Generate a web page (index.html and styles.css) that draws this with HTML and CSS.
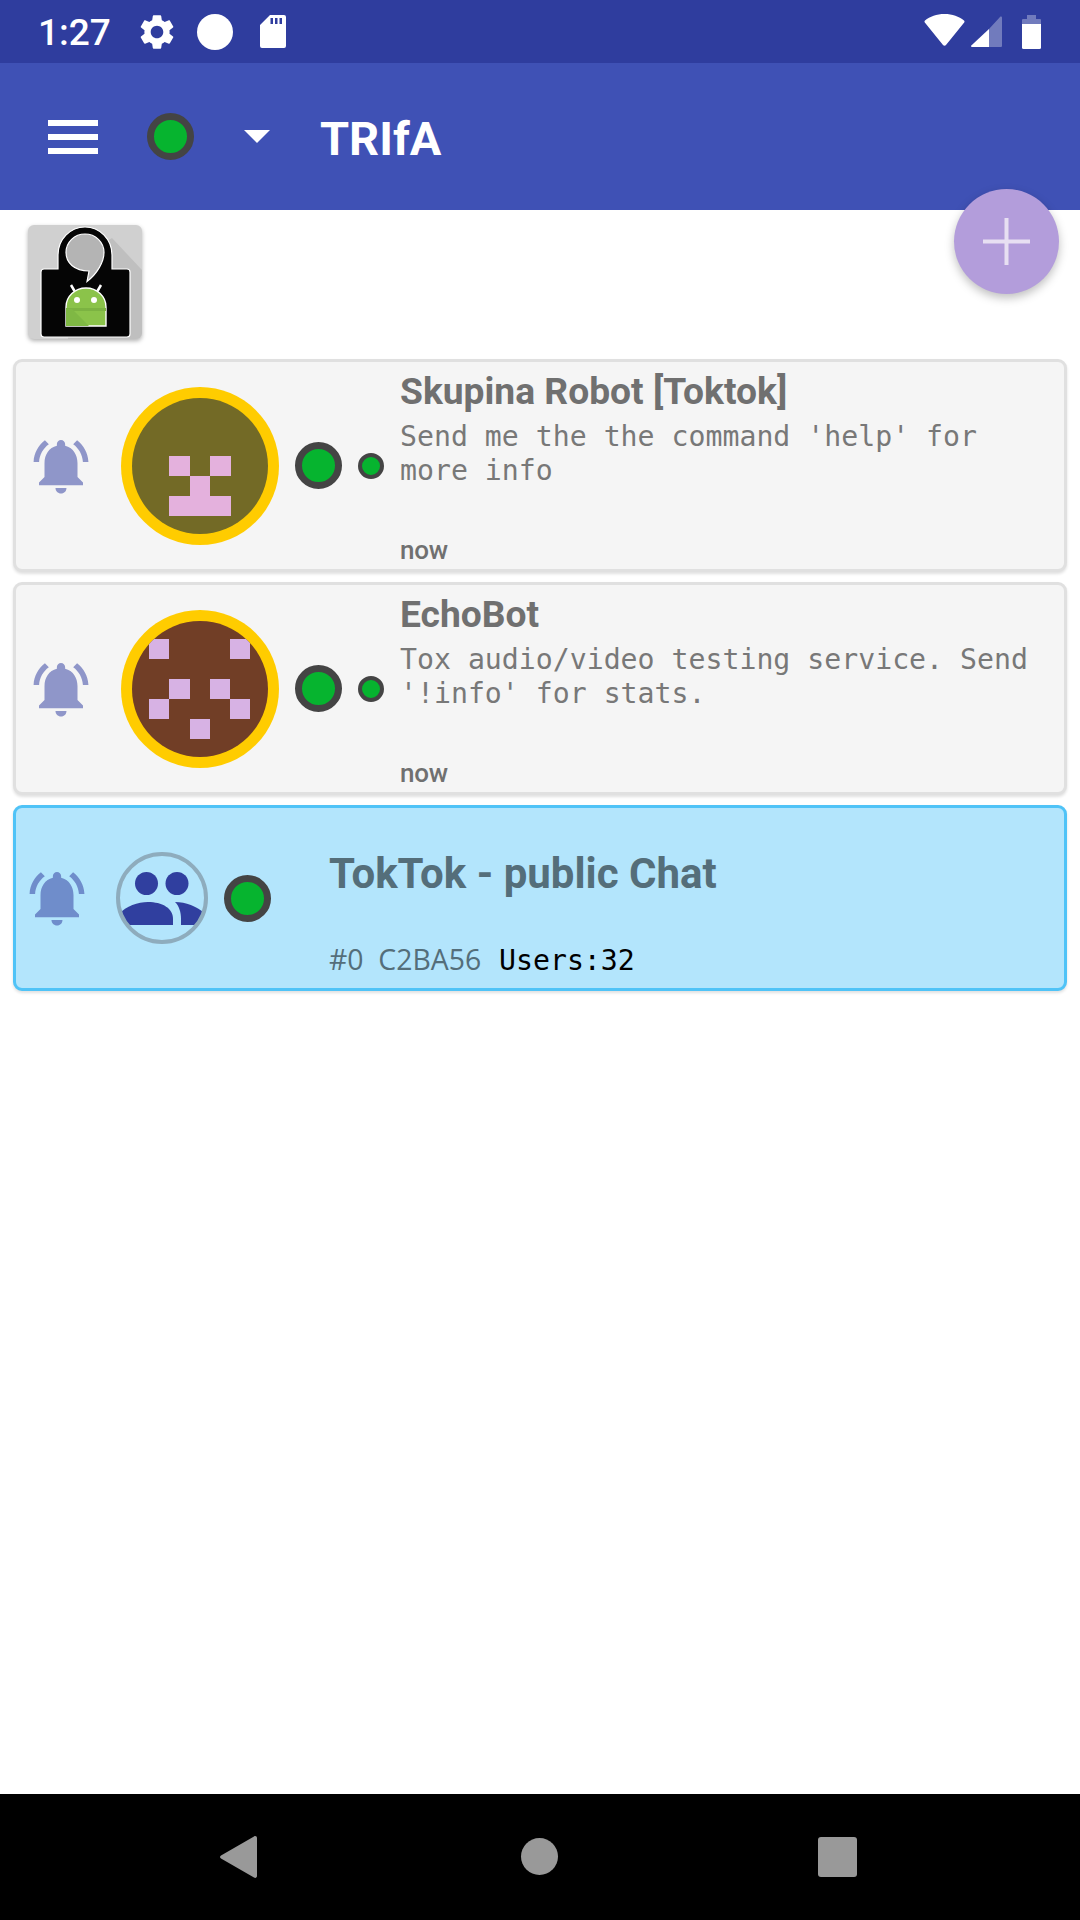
FILE: index.html
```html
<!DOCTYPE html>
<html lang="en">
<head>
<meta charset="utf-8">
<title>TRIfA</title>
<link rel="stylesheet" href="styles.css">
</head>
<body>
<div class="phone">
  <header class="statusbar">
    <span class="clock">1:27</span>
    <svg class="gear" viewBox="0 0 24 24"><path fill="#fff" d="M19.14 12.94c.04-.3.06-.61.06-.94 0-.32-.02-.64-.07-.94l2.03-1.58c.18-.14.23-.41.12-.61l-1.92-3.32c-.12-.22-.37-.29-.59-.22l-2.39.96c-.5-.38-1.03-.7-1.62-.94l-.36-2.54c-.04-.24-.24-.41-.48-.41h-3.84c-.24 0-.43.17-.47.41l-.36 2.54c-.59.24-1.13.57-1.62.94l-2.39-.96c-.22-.08-.47 0-.59.22L2.74 8.87c-.12.21-.08.47.12.61l2.03 1.58c-.05.3-.09.63-.09.94s.02.64.07.94l-2.03 1.58c-.18.14-.23.41-.12.61l1.92 3.32c.12.22.37.29.59.22l2.39-.96c.5.38 1.03.7 1.62.94l.36 2.54c.05.24.24.41.48.41h3.84c.24 0 .44-.17.47-.41l.36-2.54c.59-.24 1.13-.56 1.62-.94l2.39.96c.22.08.47 0 .59-.22l1.92-3.32c.12-.22.07-.47-.12-.61l-2.01-1.58zM12 15.6c-1.98 0-3.6-1.62-3.6-3.6s1.62-3.6 3.6-3.6 3.6 1.62 3.6 3.6-1.62 3.6-3.6 3.6z"/></svg>
    <span class="status-circle"></span>
    <svg class="sd" viewBox="0 0 26 33"><path fill="#fff" fill-rule="evenodd" d="M10 0h14a2 2 0 0 1 2 2v29a2 2 0 0 1-2 2H2a2 2 0 0 1-2-2V10zM10.500 3v6h2.500V3zM15 3v6h2.500V3zM19.500 3v6H22V3z"/></svg>
    <span class="status-spacer"></span>
    <svg class="wifi" viewBox="0 0 41 32"><path fill="#fff" d="M20.500 0C12.500 0 6 2.400 1 6.500c-.6.5-.7 1.300-.2 1.900L19 31c.8.900 2.200.900 3 0L40.200 8.400c.5-.6.400-1.400-.2-1.900C35 2.400 28.500 0 20.500 0z"/></svg>
    <svg class="signal" viewBox="0 0 31 31"><path fill="#fff" fill-opacity=".32" d="M18 13 29 1c.8-.9 2-.4 2 .7V30a1 1 0 0 1-1 1H18z"/><path fill="#fff" d="M18 13v18H1c-1 0-1.300-.9-.7-1.500z"/></svg>
    <svg class="battery" viewBox="0 0 19 34"><path fill="#fff" fill-opacity=".32" d="M5 0h9v4h4a1 1 0 0 1 1 1v4H0V5a1 1 0 0 1 1-1h4z"/><path fill="#fff" d="M0 9h19v23.500a1.500 1.500 0 0 1-1.500 1.500h-16A1.500 1.500 0 0 1 0 32.500z"/></svg>
  </header>

  <div class="toolbar">
    <span class="burger"><i></i><i></i><i></i></span>
    <span class="dot dot-lg"></span>
    <span class="caret"></span>
    <span class="app-title">TRIfA</span>
  </div>

  <main class="content">
    <div class="profile-row">
      <svg class="app-icon" viewBox="0 0 114 114">
        <defs>
          <clipPath id="iconClip"><rect width="114" height="114" rx="6"/></clipPath>
          <clipPath id="droidClip"><path d="M38 101V82a20 19 0 0 1 40 0v19z"/></clipPath>
        </defs>
        <g clip-path="url(#iconClip)">
          <rect width="114" height="114" fill="#d0d0d0"/>
          <path d="M84 13 114 45V114H40V40z" fill="#bfbfbf"/>
          <path d="M30 44V30a27 28 0 0 1 54 0v14h15a3 3 0 0 1 3 3v62a3 3 0 0 1-3 3H16a3 3 0 0 1-3-3V47a3 3 0 0 1 3-3z" fill="#050505" stroke="#fff" stroke-width="1.200"/>
          <path d="M57 9c10.500 0 19 8 19 18.500 0 9-6.500 21-17 29l2-10.500C46 46 38 37.500 38 27.500 38 17 46.500 9 57 9z" fill="#b4b4b4" stroke="#fff" stroke-width="1.200"/>
          <path d="M43 60l3.500 6M73 60l-3.500 6" stroke="#fff" stroke-width="2.500"/>
          <path d="M38 101V82a20 19 0 0 1 40 0v19z" fill="#8bc34a" stroke="#fff" stroke-width="1.400"/>
          <g clip-path="url(#droidClip)">
            <rect x="38" y="83" width="40" height="3" fill="#7cb342"/>
            <path d="M38 84h6l18 18H38z" fill="#7fb844"/>
          </g>
          <circle cx="49" cy="75" r="3" fill="#fff"/>
          <circle cx="66" cy="75" r="3" fill="#fff"/>
        </g>
      </svg>
    </div>

    <section class="list">
      <article class="card card-friend">
        <svg class="bell" viewBox="0 0 24 24"><path d="M7.580 4.080L6.150 2.650C3.750 4.480 2.170 7.300 2.030 10.500h2c.15-2.650 1.510-4.970 3.550-6.420zm12.390 6.420h2c-.15-3.200-1.730-6.020-4.120-7.850l-1.420 1.430c2.020 1.450 3.390 3.770 3.540 6.420zM18 11c0-3.070-1.640-5.640-4.500-6.320V4c0-.83-.67-1.500-1.500-1.500s-1.500.67-1.500 1.500v.68C7.630 5.360 6 7.920 6 11v5l-2 2v1h16v-1l-2-2v-5zm-6 11c.14 0 .27-.01.4-.04.65-.14 1.180-.58 1.440-1.180.1-.24.15-.5.15-.78h-4c.01 1.100.9 2 2.010 2z"/></svg>
        <svg class="avatar" viewBox="0 0 158 158">
          <defs><clipPath id="av1"><circle cx="79" cy="79" r="68"/></clipPath></defs>
          <circle cx="79" cy="79" r="79" fill="#ffcc00"/>
          <circle cx="79" cy="79" r="68" fill="#736a26"/>
          <g clip-path="url(#av1)" fill="#e4b1dd">
            <rect x="48" y="69" width="21" height="20"/><rect x="89" y="69" width="21" height="20"/>
            <rect x="69" y="89" width="20" height="20"/><rect x="48" y="109" width="62" height="20"/>
          </g>
        </svg>
        <span class="dot dot-lg"></span>
        <span class="dot dot-sm"></span>
        <div class="card-text">
          <h2 class="name">Skupina Robot [Toktok]</h2>
          <p class="status-msg">Send me the the command 'help' for more info</p>
          <span class="when">now</span>
        </div>
      </article>

      <article class="card card-friend">
        <svg class="bell" viewBox="0 0 24 24"><path d="M7.580 4.080L6.150 2.650C3.750 4.480 2.170 7.300 2.030 10.500h2c.15-2.650 1.510-4.970 3.550-6.420zm12.390 6.420h2c-.15-3.200-1.730-6.020-4.120-7.850l-1.420 1.430c2.020 1.450 3.390 3.770 3.540 6.420zM18 11c0-3.070-1.640-5.640-4.500-6.320V4c0-.83-.67-1.500-1.500-1.500s-1.500.67-1.500 1.500v.68C7.630 5.360 6 7.920 6 11v5l-2 2v1h16v-1l-2-2v-5zm-6 11c.14 0 .27-.01.4-.04.65-.14 1.180-.58 1.440-1.180.1-.24.15-.5.15-.78h-4c.01 1.100.9 2 2.010 2z"/></svg>
        <svg class="avatar" viewBox="0 0 158 158">
          <defs><clipPath id="av2"><circle cx="79" cy="79" r="68"/></clipPath></defs>
          <circle cx="79" cy="79" r="79" fill="#ffcc00"/>
          <circle cx="79" cy="79" r="68" fill="#713e26"/>
          <g clip-path="url(#av2)" fill="#d7b2e4">
            <rect x="28" y="29" width="20" height="20"/><rect x="109" y="29" width="20" height="20"/>
            <rect x="48" y="69" width="21" height="20"/><rect x="89" y="69" width="20" height="20"/>
            <rect x="28" y="89" width="20" height="20"/><rect x="109" y="89" width="20" height="20"/>
            <rect x="69" y="109" width="20" height="20"/>
          </g>
        </svg>
        <span class="dot dot-lg"></span>
        <span class="dot dot-sm"></span>
        <div class="card-text">
          <h2 class="name">EchoBot</h2>
          <p class="status-msg">Tox audio/video testing service. Send '!info' for stats.</p>
          <span class="when">now</span>
        </div>
      </article>

      <article class="card card-group">
        <svg class="bell" viewBox="0 0 24 24"><path d="M7.580 4.080L6.150 2.650C3.750 4.480 2.170 7.300 2.030 10.500h2c.15-2.650 1.510-4.970 3.550-6.420zm12.390 6.420h2c-.15-3.200-1.730-6.020-4.120-7.850l-1.420 1.430c2.020 1.450 3.390 3.770 3.540 6.420zM18 11c0-3.070-1.640-5.640-4.500-6.320V4c0-.83-.67-1.500-1.500-1.500s-1.500.67-1.500 1.500v.68C7.630 5.360 6 7.920 6 11v5l-2 2v1h16v-1l-2-2v-5zm-6 11c.14 0 .27-.01.4-.04.65-.14 1.180-.58 1.440-1.180.1-.24.15-.5.15-.78h-4c.01 1.100.9 2 2.010 2z"/></svg>
        <svg class="group-avatar" viewBox="0 0 92 92">
          <defs><clipPath id="grp"><circle cx="46" cy="46" r="44"/></clipPath></defs>
          <g fill="#303f9f" clip-path="url(#grp)">
            <circle cx="30.500" cy="31.500" r="11.500"/>
            <circle cx="61" cy="31.500" r="11.500"/>
            <path d="M3 73V62C10 54 22 50 32 50 46 50 57 56 57 67v6z"/>
            <path d="M59 50C70 50 80 54 90 62V73H65V67C65 60 63 54 59 50z"/>
          </g>
          <circle cx="46" cy="46" r="44" fill="none" stroke="#8eacbd" stroke-width="4"/>
        </svg>
        <span class="dot dot-lg"></span>
        <div class="group-text">
          <h2 class="group-name">TokTok - public Chat</h2>
          <div class="group-meta"><span class="group-id">#0&nbsp; C2BA56</span><span class="users">Users:32</span></div>
        </div>
      </article>
    </section>
  </main>

  <nav class="navbar">
    <svg class="nav-back" viewBox="0 0 37 42"><path fill="#999" d="M1 19.500 34 .5c1.500-1 3 0 3 1.500v38c0 1.500-1.500 2.500-3 1.500L1 22.500c-1.300-.8-1.300-2.200 0-3z"/></svg>
    <span class="nav-home"></span>
    <span class="nav-recent"></span>
  </nav>

  <button class="fab" type="button" aria-label="Add"><svg viewBox="0 0 47 47"><path fill="#e7dff2" d="M21.500 0h4v21.500H47v4H25.500V47h-4V25.500H0v-4h21.500z"/></svg></button>
</div>
</body>
</html>
```
FILE: styles.css
```css
* { box-sizing: border-box; }
html, body { margin: 0; padding: 0; }
body { background: #fff; font-family: Roboto, sans-serif; }

.phone {
  position: relative;
  width: 1080px;
  height: 1920px;
  display: flex;
  flex-direction: column;
  overflow: hidden;
}

/* status bar */
.statusbar {
  height: 63px;
  background: #2f3d9e;
  display: flex;
  align-items: center;
  padding: 0 39px 0 38px;
  color: #fff;
}
.clock { font-size: 37px; font-weight: 500; width: 98px; padding-top: 2px; }
.gear { width: 42px; height: 42px; margin-right: 19px; }
.status-circle { width: 36px; height: 36px; border-radius: 50%; background: #fff; margin-right: 27px; }
.sd { width: 26px; height: 33px; }
.status-spacer { flex: 1; }
.wifi { width: 41px; height: 32px; margin-right: 6px; margin-top: -3px; }
.signal { width: 31px; height: 31px; margin-right: 20px; }
.battery { width: 19px; height: 34px; }

/* toolbar */
.toolbar {
  height: 147px;
  background: #3f51b5;
  display: flex;
  align-items: center;
  padding-left: 48px;
}
.burger { width: 50px; height: 34px; display: flex; flex-direction: column; justify-content: space-between; margin-right: 49px; }
.burger i { display: block; height: 6px; background: #fff; }
.toolbar .dot-lg { margin-right: 50px; }
.caret {
  width: 0; height: 0;
  border-left: 13px solid transparent;
  border-right: 13px solid transparent;
  border-top: 13px solid #fff;
  margin-right: 50px;
}
.app-title { font-size: 47px; font-weight: 700; color: #fff; line-height: 1; padding-top: 4px; }

/* presence dots */
.dot { display: block; flex: none; border-radius: 50%; background: #06b42f; border-style: solid; border-color: #444; }
.dot-lg { width: 47px; height: 47px; border-width: 7px; }
.dot-sm { width: 26px; height: 26px; border-width: 4px; }

/* content */
.content { flex: 1; padding: 15px 13px 0; }
.profile-row { height: 134px; padding-left: 15px; }
.app-icon { display: block; width: 114px; height: 114px; filter: drop-shadow(0 2px 2px rgba(0,0,0,.3)); }
.list { display: flex; flex-direction: column; gap: 10px; }

.card {
  width: 1054px;
  display: flex;
  align-items: center;
  border-radius: 9px;
  border: 3px solid #e0e0e0;
  background: #f5f5f5;
  box-shadow: 0 2px 3px rgba(0,0,0,.12);
}
.card-friend { height: 213px; padding-left: 12px; }
.card-group {
  height: 186px;
  padding-left: 8px;
  background: #b3e5fc;
  border-color: #4fc3f7;
}

.bell { width: 66px; height: 66px; flex: none; fill: #8f96c9; }
.card-group .bell { fill: #6f8dcb; }
.avatar { width: 158px; height: 158px; flex: none; margin-left: 27px; }
.card-friend .dot-lg { margin-left: 16px; }
.dot-sm { margin-left: 16px; }

.card-text {
  align-self: stretch;
  margin-left: 16px;
  flex: 1;
  min-width: 0;
  display: flex;
  flex-direction: column;
  color: #707070;
}
.name { margin: 8px 0 0; font-size: 37.200px; line-height: 42px; font-weight: 700; }
.status-msg {
  margin: 8px 0 0;
  font-family: "DejaVu Sans Mono", monospace;
  font-size: 28.200px;
  line-height: 34px;
  width: 640px;
  color: #787878;
}
.when { margin-top: auto; margin-bottom: 4px; font-size: 26px; line-height: 30px; font-weight: 500; letter-spacing: -.2px; }

.group-avatar { width: 92px; height: 92px; flex: none; margin-left: 26px; }
.card-group .dot-lg { margin-left: 16px; }
.group-text {
  align-self: stretch;
  margin-left: 58px;
  flex: 1;
  display: flex;
  flex-direction: column;
  color: #546e7a;
}
.group-name { margin: 42px 0 0; font-size: 42px; line-height: 48px; font-weight: 700; }
.group-meta { margin-top: auto; margin-bottom: 10px; display: flex; align-items: baseline; font-size: 28.400px; line-height: 34px; }
.group-id { font-family: "Open Sans", sans-serif; width: 170px; }
.users { font-family: "DejaVu Sans Mono", monospace; font-size: 28.200px; color: #000; }

/* nav bar */
.navbar { height: 126px; background: #000; position: relative; display: flex; align-items: center; padding-bottom: 1px; }
.nav-back { width: 37px; height: 42px; margin-left: 220px; }
.nav-home { width: 37px; height: 37px; border-radius: 50%; background: #999; margin-left: 264px; }
.nav-recent { width: 39px; height: 40px; border-radius: 3px; background: #999; margin-left: 260px; }

/* floating button */
.fab {
  position: absolute;
  left: 954px;
  top: 189px;
  width: 105px;
  height: 105px;
  border: 0;
  padding: 29px;
  border-radius: 50%;
  background: #b39ddb;
  box-shadow: 0 4px 10px rgba(0,0,0,.25);
}
.fab svg { display: block; width: 47px; height: 47px; }
```
